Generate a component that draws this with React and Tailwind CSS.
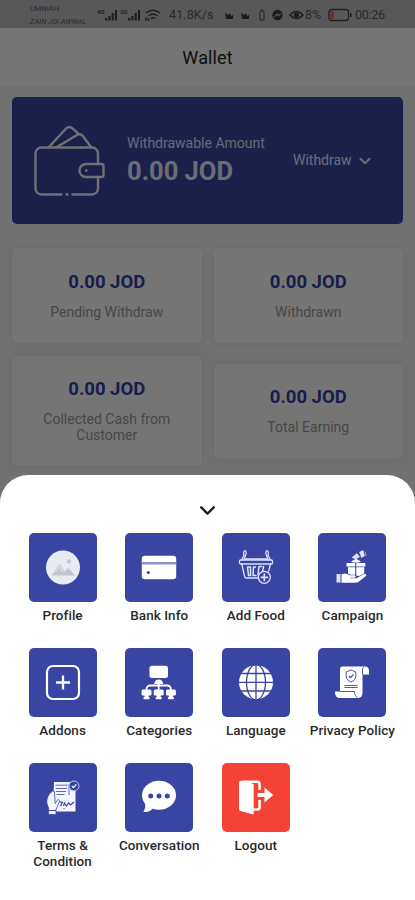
import { ChevronDown } from "lucide-react";

const BLUE = "#3845a3";

const WalletIcon = () => (
  <svg viewBox="0 0 72 72" className="h-[72px] w-[72px] shrink-0" fill="none" stroke="#f4f6ff" strokeWidth="2.4" strokeLinecap="round" strokeLinejoin="round">
    <path d="M27.5 69.500H7.500a6 6 0 0 1-6-6V28.500a6 6 0 0 1 6-6h50.500a6 6 0 0 1 6 6V39M64 52V63.500a6 6 0 0 1-6 6H38.500" />
    <path d="M33 69.500h.1" strokeWidth="2.8" />
    <path d="M52 39h15.500a2 2 0 0 1 2 2v9a2 2 0 0 1-2 2H52a6.500 6.500 0 0 1 0-13z" />
    <path d="M15 22L31.800 3.700a5 5 0 0 1 6.700-.3l5.800 5.200" />
    <path d="M23 22L43 10a4.500 4.500 0 0 1 6.500 2l7.500 10" />
    <circle cx="52.300" cy="45.500" r=".6" strokeWidth="1.600" />
  </svg>
);

const ProfileIcon = () => (
  <>
    <circle cx="18" cy="18.500" r="17" fill="#e9ebf3" />
    <path d="M6.500 26.500L14.500 15l5.500 8 3-4.500 7 8z" fill="#c2c6cf" />
    <path d="M10.500 23l4-5.500 3.500 5.500" fill="none" stroke="#e9ebf3" />
    <circle cx="24" cy="12.500" r="2.200" fill="#c6c9d2" />
  </>
);

const BankIcon = () => (
  <>
    <rect x=".8" y="6.800" width="34.400" height="23.400" rx="3" fill="#fff" />
    <path d="M.8 14.200h34.400" stroke="#8e95cb" strokeWidth="2.500" />
    <circle cx="7.300" cy="23.500" r="1.500" fill={BLUE} />
  </>
);

const FoodIcon = () => (
  <g fill="none" stroke="#dbe3ff" strokeWidth="1.300" strokeLinejoin="round" strokeLinecap="round">
    <path d="M3.500 11L6 6.500c-.8-2.500-.2-4.500 1-5 1.400.6 1.500 3.200.4 5L6 11M32.500 11L30 6.500c.8-2.500.2-4.500-1-5-1.400.6-1.500 3.200-.4 5L30 11" />
    <path d="M7.500 10h21" />
    <rect x="1.500" y="11" width="33" height="4" rx="1.200" />
    <path d="M3.800 15l2.800 12.500a2 2 0 0 0 2 1.500H20M32.500 15l-1.800 7" />
    <path d="M9.500 18h3v8.500h-2zM17.500 18h-2l-.5 8.500h3M21 17.500l-1 8M25.500 17.500l-1 5M21 17.500h2.500" strokeWidth="1.500" />
    <circle cx="26.300" cy="28.300" r="6" fill={BLUE} />
    <path d="M26.300 25.200v6.200M23.200 28.300h6.200" strokeWidth="1.700" />
  </g>
);

const CampaignIcon = () => (
  <g fill="#fff">
    <path d="M2.500 25h4v8.500h-4z" opacity=".85" />
    <path d="M7.500 25.500c3.500-2 6-.8 8 .8h5c1.700 0 1.700 2.400 0 2.400h-4.500v.6h6.500l7.500-4.200c2-.8 3.200.9 1.700 2.200l-7 5.500c-1 .7-2 .9-3.300.9H7.500z" />
    <path d="M12.500 14h8.700v3.500h-8.700zM22.300 14h9v3.500h-9zM14 18.300h7.200v7.500H17l-3-1zM22.300 18.300h7.900v6l-5 2.700-2.900-.5z" />
    <path d="M17 12.500l5-2.800 5 2.800-2.500 1h-5z" />
    <path d="M18 8.500l5-4 2.500 3.500-4 2zM25.500 3l3.500-1.500 1.500 5.500-3 1.500zM31 2.500l1.300 4.700" stroke="#fff" strokeWidth=".6" opacity=".85" />
  </g>
);

const AddonsIcon = () => (
  <g fill="none" stroke="#fff" strokeLinecap="round">
    <rect x="2" y="2" width="32" height="33" rx="6" strokeWidth="2.200" />
    <path d="M18 11.500v14M11 18.500h14" strokeWidth="2.300" strokeLinecap="butt" />
  </g>
);

const CategoriesIcon = () => (
  <g fill="#fff">
    <rect x="8.500" y="1.800" width="18.500" height="12.200" rx="2.500" />
    <path d="M13.200 20a4.500 4.500 0 0 1 9 0z" />
    <path d="M17.700 18v9M17.700 21.500H9a3.500 3.500 0 0 0-3.500 3.500v2M17.700 21.500h8.700a3.500 3.500 0 0 1 3.500 3.500v2" fill="none" stroke="#fff" strokeWidth="1.800" />
    {[5.5, 17.7, 29.9].map((x) => (
      <g key={x}>
        <rect x={x - 5} y="25.500" width="10" height="6" rx="1.500" />
        <rect x={x - 2} y="30" width="4" height="4" />
        <rect x={x - 3} y="33" width="6" height="2.200" rx=".6" />
      </g>
    ))}
  </g>
);

const LanguageIcon = () => (
  <>
    <circle cx="18" cy="18.300" r="17" fill="#fff" />
    <g fill="none" stroke={BLUE} strokeWidth="1.300">
      <path d="M18 1v35M0 18.300h36M3 9.500h30M3 27h30" />
      <ellipse cx="18" cy="18.300" rx="9.500" ry="17.600" />
    </g>
  </>
);

const PolicyIcon = () => (
  <>
    <path d="M8.500 2.500H31c2.800 0 4 1.700 4 4.200V10.500h-6.500V29c0 3-1.800 5-4.500 5H6c-3.200 0-5-2-5-6.500h5V5c0-1.600 1-2.500 2.500-2.500z" fill="#fff" />
    <g fill="none" stroke={BLUE} strokeWidth=".9">
      <path d="M28.500 10.500V6c0-1.300.5-2.300 1.500-3M6 27.500h14.500c0 3.200 1 5 3 6" />
      <path d="M17 6l4.800 2v4c0 3-2 4.800-4.800 6-2.800-1.200-4.800-3-4.800-6V8z" />
      <path d="M14.800 12l1.700 1.700 3-3.400" strokeWidth="1.100" />
      <path d="M10.300 21.500h13.400M10.300 23.500h13.400" />
    </g>
  </>
);

const TermsIcon = () => (
  <>
    <path d="M9 3h18v5h3.500v24.500H11L8 28z" fill="#f3f5ff" />
    <path d="M7.500 12C3.500 15 1.500 19 1.800 24l1.700 5v6.500H11v-5l3.500-8c.7-1.800-1.400-2.600-2.400-1l-2 3-.6-12z" fill="#f3f5ff" stroke={BLUE} strokeWidth=".8" />
    <path d="M3.500 31.500H11" stroke={BLUE} />
    <g fill="none" stroke={BLUE} strokeWidth=".8">
      <path d="M10.500 6.200h12M11 9.500h11M11 12.500h10M11.500 15.500h8M24 5v11" />
      <path d="M14.500 23l3 .3-2 4M18.500 27l1-3 2 3 2-3 2 2 3.500-3M18.500 29.500h1" strokeWidth="1.200" />
      <circle cx="29" cy="7" r="5" stroke="#dbe1ff" fill={BLUE} />
      <path d="M26.800 7l1.600 1.600 3-3.300" stroke="#fff" strokeWidth="1.200" />
    </g>
  </>
);

const ConversationIcon = () => (
  <>
    <ellipse cx="18" cy="16.200" rx="17" ry="14.500" fill="#fff" />
    <path d="M3.500 23c1.500 4 .8 7-1.200 9.700 4 .7 7.200-.5 9.500-3.200z" fill="#fff" />
    {[9.7, 18, 26.3].map((x) => (
      <circle key={x} cx={x} cy="17" r="2.500" fill={BLUE} />
    ))}
  </>
);

const LogoutIcon = () => (
  <>
    <path d="M1 3.800c0-1.300.8-2 2-2h3L15.700 5v30.500L2.500 32c-1-.3-1.500-.9-1.500-2z" fill="#fff" />
    <path d="M5 2.700h14a2.600 2.600 0 0 1 2.600 2.600V11M15.500 30.500h3.500a2.600 2.600 0 0 0 2.600-2.600V21" fill="none" stroke="#fff" strokeWidth="2.500" />
    <path d="M19.500 14h7V8.500l8.700 7.500-8.700 7.500v-5.500h-7z" fill="#fff" />
  </>
);

const menu = [
  { label: "Profile", Icon: ProfileIcon },
  { label: "Bank Info", Icon: BankIcon },
  { label: "Add Food", Icon: FoodIcon },
  { label: "Campaign", Icon: CampaignIcon },
  { label: "Addons", Icon: AddonsIcon },
  { label: "Categories", Icon: CategoriesIcon },
  { label: "Language", Icon: LanguageIcon },
  { label: "Privacy Policy", Icon: PolicyIcon },
  { label: "Terms & Condition", Icon: TermsIcon },
  { label: "Conversation", Icon: ConversationIcon },
  { label: "Logout", Icon: LogoutIcon, danger: true },
];

const stats = [
  { label: "Pending Withdraw", height: "h-[95px]" },
  { label: "Withdrawn", height: "h-[95px]" },
  { label: "Collected Cash from Customer", height: "h-[110px]" },
  { label: "Total Earning", height: "h-[95px]" },
];

const Signal = ({ tag }) => (
  <svg viewBox="0 0 23 14" className="h-3.5 w-[23px] shrink-0" fill="#444">
    <text x="0" y="5.500" fontSize="6" fontWeight="700">{tag}</text>
    <path d="M8 10h2.200v2.500H8zM11.300 8h2.200v4.500h-2.200zM14.600 5h2.200v7.500h-2.200zM17.900 2h2.200v10.500h-2.200z" />
  </svg>
);

const StatusBar = () => (
  <div className="flex h-7 items-center bg-[#c1c1c1] pl-[30px] pt-0.5 text-[#555]">
    <div className="w-[67px] shrink-0 whitespace-nowrap text-[7.500px] leading-[13px]">
      <p>UMNIAH</p>
      <p className="italic">ZAIN JO| AWWAL</p>
    </div>
    <Signal tag="4G" />
    <Signal tag="3G" />
    <svg viewBox="0 0 18 14" className="h-3.5 w-[18px] shrink-0" fill="none" stroke="#444" strokeWidth="1.500">
      <path d="M3 5q7-5.500 14 0M5.500 8q4.500-4 9 0M8 10.800q2-2 4 0" />
      <path d="M3 9v4M5.500 10v3" />
    </svg>
    <span className="ml-2 w-[54px] shrink-0 text-[12.500px] tracking-[0.1px]">41.8K/s</span>
    <svg viewBox="0 0 82 14" className="h-3.5 w-[82px] shrink-0" fill="#3c3c3c">
      <path d="M2 4.500l3 2.500 2-2 1 3 2-1v4H3zM18 4.500l3 2.500 2-2 1 3 2-1v4h-7z" />
      <path d="M37 3.500h1V2h2v1.500h1V12h-4z" fill="none" stroke="#444" />
      <circle cx="54.500" cy="7" r="5.200" />
      <path d="M51.500 8.800l2.300-2.600 1.800 1.500 2-2.200" fill="none" stroke="#c1c1c1" strokeWidth="1.200" />
      <path d="M67 7q6.500-7 13 0q-6.500 7-13 0z" fill="none" stroke="#3c3c3c" strokeWidth="1.400" />
      <circle cx="73.500" cy="7" r="2.600" />
    </svg>
    <span className="w-[22px] shrink-0 text-[12.500px]">8%</span>
    <svg viewBox="0 0 26 14" className="h-3.5 w-[28px] shrink-0">
      <rect x="1" y="1.500" width="19.500" height="11" rx="2.500" fill="none" stroke="#444" strokeWidth="1.300" />
      <rect x="2.500" y="3" width="3.500" height="8" rx="1" fill="#ff5a4d" />
      <path d="M22.800 5v4" stroke="#444" strokeWidth="1.600" />
    </svg>
    <span className="text-[12.500px] -tracking-[0.3px]">00:26</span>
  </div>
);

const MenuItem = ({ label, Icon, danger }) => (
  <button className="flex h-[115px] flex-col items-center">
    <div className={`flex h-[69px] w-[68px] items-center justify-center rounded-[5px] ${danger ? "bg-[#f44336]" : "bg-[#3845a3]"}`}>
      <svg viewBox="0 0 36 37" className="h-[37px] w-9">
        <Icon />
      </svg>
    </div>
    <span className={`mt-[5px] text-center text-[13.500px] font-medium leading-4 tracking-[0.05px] text-[#2a2a2a] ${label.includes("&") ? "w-[76px]" : "whitespace-nowrap"}`}>
      {label}
    </span>
  </button>
);

const App = () => {
  return (
    <div className="relative flex h-[900px] w-[415px] flex-col overflow-hidden bg-white font-['Roboto',sans-serif]">
      <StatusBar />

      {/* Wallet page */}
      <header className="flex h-[58px] items-center justify-center bg-white text-[18px] tracking-[0.1px] text-[#222]">
        Wallet
      </header>
      <main className="flex-1 bg-[#f6f6f6] px-3 pt-[11px]">
        <section className="flex h-[127px] items-center rounded-[5px] bg-[#3b46a4] pl-[22px] text-[#e9edff]">
          <WalletIcon />
          <div className="-mt-0.5 ml-[21px] w-[166px]">
            <p className="text-[14px] leading-4 text-[#dfe4fb]">Withdrawable Amount</p>
            <p className="mt-[7px] text-[25.500px] font-bold leading-[26px]">0.00 JOD</p>
          </div>
          <div className="flex items-center gap-1 text-[14px]">
            Withdraw
            <ChevronDown size={18} strokeWidth={2.800} />
          </div>
        </section>

        <section className="mt-6 grid grid-cols-2 items-center gap-x-3 gap-y-[13px]">
          {stats.map(({ label, height }) => (
            <div
              key={label}
              className={`${height} flex flex-col items-center justify-center rounded-[5px] bg-white shadow-[0_0_6px_2px_rgba(0,0,0,0.05)]`}
            >
              <p className="text-[18.500px] font-bold leading-5 text-[#3540a5]">0.00 JOD</p>
              <p className="mt-3 w-[136px] text-center text-[14px] leading-4 text-[#999]">{label}</p>
            </div>
          ))}
        </section>
      </main>

      {/* Dimmed backdrop */}
      <div className="absolute inset-0 bg-black/54" />

      {/* Bottom sheet */}
      <div className="absolute inset-x-0 bottom-0 flex h-[425px] flex-col items-center rounded-t-[28px] bg-white">
        <ChevronDown size={25} strokeWidth={2.300} className="mt-[23px] text-[#222]" />
        <div className="mt-2.5 grid grid-cols-[repeat(4,96.600px)]">
          {menu.map((item) => (
            <MenuItem key={item.label} {...item} />
          ))}
        </div>
      </div>
    </div>
  );
};

export default App;
